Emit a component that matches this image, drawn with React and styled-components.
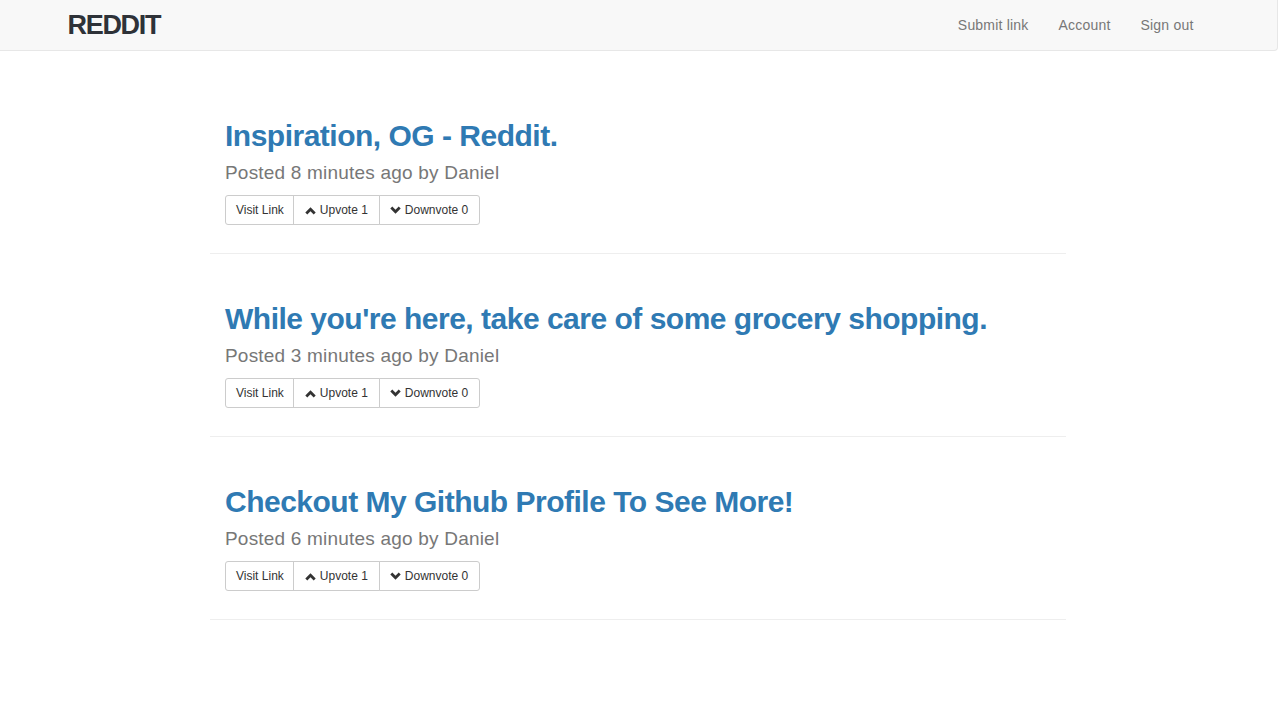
import styled, { createGlobalStyle } from "styled-components";

const GlobalStyle = createGlobalStyle`
  body {
    margin: 0;
    background: #fff;
    font-family: "Liberation Sans", Arial, Helvetica, sans-serif;
    color: #333;
  }
`;

const Navbar = styled.nav`
  height: 50px;
  background: #f8f8f8;
  border: 1px solid #e7e7e7;
  border-top: none;
  border-left: none;
  border-radius: 0 0 4px 0;
`;

const NavContainer = styled.div`
  width: 1140px;
  margin: 0 auto;
  padding: 0 15px;
  height: 100%;
  display: flex;
  align-items: center;
  justify-content: space-between;
`;

const Brand = styled.a`
  margin-left: -1px;
  font-size: 27px;
  font-weight: 700;
  letter-spacing: -1.3px;
  color: #2e3238;
  text-decoration: none;
  line-height: 50px;
`;

const NavLinks = styled.ul`
  list-style: none;
  margin: 0;
  padding: 0;
  display: flex;
`;

const NavLink = styled.a`
  display: block;
  padding: 0 15px;
  line-height: 50px;
  font-size: 14px;
  letter-spacing: 0.2px;
  color: #777;
  text-decoration: none;
`;

const Main = styled.main`
  width: 856px;
  margin: 20px 0 0 calc(50% - 429px);
`;

const Post = styled.article`
  padding: 48px 15px 0;
`;

const Title = styled.h2`
  margin: 0;
  font-size: 30px;
  font-weight: 700;
  letter-spacing: -0.5px;
  line-height: 33px;
  color: #2f7ab3;
`;

const Meta = styled.p`
  margin: 8px 0 0;
  font-size: 19px;
  letter-spacing: 0.2px;
  line-height: 26px;
  color: #777;
`;

const ButtonGroup = styled.div`
  display: inline-flex;
  margin-top: 9px;
`;

const Button = styled.button`
  display: inline-flex;
  align-items: center;
  gap: 4px;
  height: 30px;
  padding: 0 11px;
  font-family: inherit;
  font-size: 12px;
  color: #333;
  background: #fff;
  border: 1px solid #ccc;
  border-radius: 0;
  margin-left: -1px;
  cursor: pointer;

  &:first-child {
    margin-left: 0;
    padding: 0 9px 0 10px;
    border-radius: 3px 0 0 3px;
  }
  &:last-child {
    padding: 0 11px 0 10px;
    border-radius: 0 3px 3px 0;
  }
`;

const Divider = styled.hr`
  margin: 28px 0 0;
  border: 0;
  border-top: 1px solid #eee;
`;

const Chevron = ({ down }) => (
  <svg width="11" height="9" viewBox="0 0 11 9" aria-hidden="true">
    <path
      d={down ? "M0.3 2.6 L2.3 0.6 L5.5 3.8 L8.7 0.6 L10.7 2.6 L5.5 7.8 Z" : "M0.3 6.4 L2.3 8.4 L5.5 5.2 L8.7 8.4 L10.7 6.4 L5.5 1.2 Z"}
      fill="#333"
    />
  </svg>
);

const posts = [
  { title: "Inspiration, OG - Reddit.", ago: "8 minutes", up: 1, down: 0 },
  { title: "While you're here, take care of some grocery shopping.", ago: "3 minutes", up: 1, down: 0 },
  { title: "Checkout My Github Profile To See More!", ago: "6 minutes", up: 1, down: 0 },
];

export default function App() {
  return (
    <>
      <GlobalStyle />
      <Navbar>
        <NavContainer>
          <Brand href="#">REDDIT</Brand>
          <NavLinks>
            <li><NavLink href="#">Submit link</NavLink></li>
            <li><NavLink href="#">Account</NavLink></li>
            <li><NavLink href="#">Sign out</NavLink></li>
          </NavLinks>
        </NavContainer>
      </Navbar>
      <Main>
        {posts.map((p) => (
          <div key={p.title}>
            <Post>
              <Title>{p.title}</Title>
              <Meta>Posted {p.ago} ago by Daniel</Meta>
              <ButtonGroup>
                <Button>Visit Link</Button>
                <Button><Chevron /> Upvote {p.up}</Button>
                <Button><Chevron down /> Downvote {p.down}</Button>
              </ButtonGroup>
            </Post>
            <Divider />
          </div>
        ))}
      </Main>
    </>
  );
}
